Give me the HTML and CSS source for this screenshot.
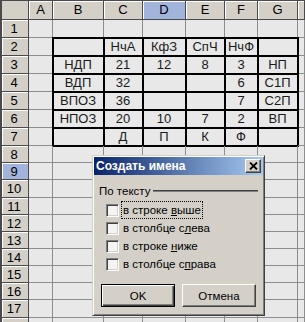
FILE: index.html
```html
<!DOCTYPE html>
<html lang="ru">
<head>
    <meta charset="UTF-8">
    <meta name="viewport" content="width=device-width, initial-scale=1.0">
    <title>Создать имена</title>
    <link rel="stylesheet" href="styles.css">
</head>
<body>
    <div class="screen">
        <div class="sheet">
            <div class="ch corner"></div><div class="ch">A</div><div class="ch">B</div><div class="ch">C</div><div class="ch sel">D</div><div class="ch">E</div><div class="ch">F</div><div class="ch">G</div><div class="ch"></div>

            <div class="rh">1</div><div></div><div></div><div></div><div></div><div></div><div></div><div></div><div></div>
            <div class="rh">2</div><div></div><div class="b"></div><div class="b">НчА</div><div class="b">КфЗ</div><div class="b">СпЧ</div><div class="b">НчФ</div><div class="b"></div><div></div>
            <div class="rh">3</div><div></div><div class="b">НДП</div><div class="b">21</div><div class="b">12</div><div class="b">8</div><div class="b">3</div><div class="b">НП</div><div></div>
            <div class="rh">4</div><div></div><div class="b">ВДП</div><div class="b">32</div><div class="b"></div><div class="b"></div><div class="b">6</div><div class="b">С1П</div><div></div>
            <div class="rh">5</div><div></div><div class="b">ВПОЗ</div><div class="b">36</div><div class="b"></div><div class="b"></div><div class="b">7</div><div class="b">С2П</div><div></div>
            <div class="rh">6</div><div></div><div class="b">НПОЗ</div><div class="b">20</div><div class="b">10</div><div class="b">7</div><div class="b">2</div><div class="b">ВП</div><div></div>
            <div class="rh">7</div><div></div><div class="b"></div><div class="b">Д</div><div class="b">П</div><div class="b">К</div><div class="b">Ф</div><div class="b"></div><div></div>
            <div class="rh">8</div><div></div><div></div><div></div><div></div><div></div><div></div><div></div><div></div>
            <div class="rh sel">9</div><div></div><div></div><div></div><div></div><div></div><div></div><div></div><div></div>
            <div class="rh">10</div><div></div><div></div><div></div><div></div><div></div><div></div><div></div><div></div>
            <div class="rh">11</div><div></div><div></div><div></div><div></div><div></div><div></div><div></div><div></div>
            <div class="rh">12</div><div></div><div></div><div></div><div></div><div></div><div></div><div></div><div></div>
            <div class="rh">13</div><div></div><div></div><div></div><div></div><div></div><div></div><div></div><div></div>
            <div class="rh">14</div><div></div><div></div><div></div><div></div><div></div><div></div><div></div><div></div>
            <div class="rh">15</div><div></div><div></div><div></div><div></div><div></div><div></div><div></div><div></div>
            <div class="rh">16</div><div></div><div></div><div></div><div></div><div></div><div></div><div></div><div></div>
            <div class="rh">17</div><div></div><div></div><div></div><div></div><div></div><div></div><div></div><div></div>
            <div class="rh">18</div><div></div><div></div><div></div><div></div><div></div><div></div><div></div><div></div>
        </div>

        <div class="dialog">
            <div class="titlebar">
                <span>Создать имена</span>
                <div class="close">
                    <svg width="9" height="8" viewBox="0 0 9 8"><path d="M1 0.5 L8 7.5 M8 0.5 L1 7.5" stroke="#000" stroke-width="1.8" fill="none"/></svg>
                </div>
            </div>
            <div class="dlg-body">
                <div class="group-title"><span>По тексту</span></div>
                <div class="options">
                    <div class="opt"><div class="check"></div><span class="focus">в строке <u>в</u>ыше</span></div>
                    <div class="opt"><div class="check"></div><span>в столбце с<u>л</u>ева</span></div>
                    <div class="opt"><div class="check"></div><span>в строке <u>н</u>иже</span></div>
                    <div class="opt"><div class="check"></div><span>в столбце с<u>п</u>рава</span></div>
                </div>
                <div class="buttons">
                    <div class="btn default">OK</div>
                    <div class="btn">Отмена</div>
                </div>
            </div>
        </div>
    </div>
</body>
</html>
```

FILE: styles.css
```css
body {
    margin: 0;
    font-family: "Liberation Sans", Arial, sans-serif;
    background-color: #e8e8e8;
    overflow: hidden;
}
.screen {
    position: relative;
    width: 305px;
    height: 322px;
    overflow: hidden;
}
.sheet {
    display: grid;
    grid-template-columns: 29px 24px 51px 39px 43px 39px 33px 40px 1fr;
    grid-template-rows: 20px repeat(7, 18px) 17px 17px 18px 17px 17px 17px 17px 17px 17px 18px 17px;
    background-color: #e8e8e8;
    font-size: 13px;
    color: #1a1a1a;
}
.sheet > div {
    box-sizing: border-box;
    border-right: 1px solid #8e8e8e;
    border-bottom: 1px solid #8e8e8e;
    display: flex;
    align-items: center;
    justify-content: center;
    white-space: nowrap;
    overflow: hidden;
}
.sheet > .b {
    outline: 2px solid #000;
    outline-offset: -1px;
}
.sheet > .ch, .sheet > .rh {
    background-color: #d4d0c8;
    border-right-color: #4a4a4a;
    border-bottom-color: #4a4a4a;
    font-size: 13px;
    color: #000;
}
.sheet > .rh {
    box-shadow: inset 2px 0 0 #4a4a4a, inset 3px 1px 0 #fff;
}
.sheet > .ch {
    box-shadow: inset 0 1px 0 #4a4a4a, inset 1px 2px 0 #fff;
}
.sheet > .corner {
    box-shadow: inset 2px 1px 0 #4a4a4a;
}
.sheet > .sel {
    background-color: #a3b4dc;
}

.dialog {
    position: absolute;
    left: 92px;
    top: 155px;
    width: 173px;
    height: 161px;
    box-sizing: border-box;
    padding: 1px;
    background-color: #d4d0c8;
    border: 1px solid;
    border-color: #d4d0c8 #404040 #404040 #d4d0c8;
    box-shadow: inset 1px 1px 0 #fff, inset -1px -1px 0 #808080;
    font-size: 11.5px;
    color: #000;
}
.titlebar {
    height: 18px;
    display: flex;
    align-items: center;
    justify-content: space-between;
    padding: 0 2px;
    background: linear-gradient(to right, #0a246a, #a6caf0);
    color: #fff;
    font-weight: bold;
    font-size: 12px;
}
.close {
    width: 16px;
    height: 14px;
    box-sizing: border-box;
    background-color: #d4d0c8;
    border: 1px solid;
    border-color: #fff #404040 #404040 #fff;
    box-shadow: inset -1px -1px 0 #808080;
    display: flex;
    align-items: center;
    justify-content: center;
}
.dlg-body {
    padding: 9px 5px 0 5px;
}
.group-title {
    display: flex;
    align-items: center;
    height: 14px;
}
.group-title::after {
    content: "";
    flex: 1;
    margin-left: 3px;
    border-top: 1px solid #404040;
    border-bottom: 1px solid #808080;
}
.options {
    margin-top: 3px;
    padding-left: 7px;
}
.opt {
    height: 18px;
    display: flex;
    align-items: center;
}
.check {
    width: 13px;
    height: 13px;
    box-sizing: border-box;
    background-color: #f4f4f4;
    border: 1px solid;
    border-color: #808080 #fff #fff #808080;
    box-shadow: inset 1px 1px 0 #404040, inset -1px -1px 0 #d4d0c8;
    margin-right: 3px;
}
.opt span {
    padding: 1px 1px;
    line-height: 14px;
}
.opt .focus {
    outline: 1px dotted #000;
}
.buttons {
    display: flex;
    justify-content: center;
    gap: 7px;
    margin-top: 11px;
}
.btn {
    width: 74px;
    height: 23px;
    box-sizing: border-box;
    display: flex;
    align-items: center;
    justify-content: center;
    border: 1px solid;
    border-color: #fff #404040 #404040 #fff;
    box-shadow: inset -1px -1px 0 #808080;
}
.btn.default {
    border-color: #000;
    box-shadow: inset 1px 1px 0 #fff, inset -1px -1px 0 #404040, inset -2px -2px 0 #808080;
}
```
